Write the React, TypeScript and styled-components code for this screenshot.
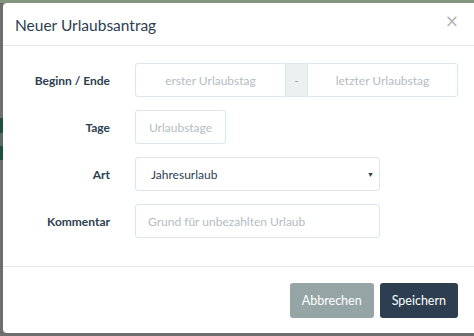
import React from "react";
import styled, { createGlobalStyle } from "styled-components";

const Global = createGlobalStyle`
  html, body { margin: 0; padding: 0; }
  body {
    width: 474px;
    height: 336px;
    overflow: hidden;
    font-family: Lato, "Open Sans", sans-serif;
    background: linear-gradient(
      to bottom,
      #6e6e6e 0px, #6e6e6e 118px,
      #1f4f43 118px, #1f4f43 133px,
      #5a6a66 133px, #5a6a66 146px,
      #1f4f43 146px, #1f4f43 160px,
      #6e6e6e 160px
    );
  }
`;

const Backdrop = styled.div`
  width: 474px;
  height: 336px;
  padding: 3px 0 0 3px;
  box-sizing: border-box;
  background: linear-gradient(to bottom, #86937f 0, #86937f 3px, transparent 3px);
`;

const Modal = styled.div`
  width: 490px;
  height: 330px;
  background: #fff;
  border-radius: 4px 0 0 4px;
  box-sizing: border-box;
  display: flex;
  flex-direction: column;
`;

const Header = styled.div`
  height: 43px;
  box-sizing: border-box;
  border-bottom: 1px solid #e5e5e5;
  display: flex;
  align-items: center;
  padding: 0 12px;
  width: 471px;
`;

const Title = styled.h4`
  margin: 0;
  flex: 1;
  font-size: 15.5px;
  font-weight: 400;
  color: #2c3e50;
  padding-top: 1px;
`;

const Close = styled.button`
  border: 0;
  background: none;
  padding: 0;
  margin-top: -6px;
  margin-right: 3px;
  font-family: "DejaVu Sans", sans-serif;
  font-size: 17px;
  line-height: 1;
  color: #b5b5b5;
  cursor: pointer;
`;

const Body = styled.form`
  padding: 17px 0 28px;
  display: flex;
  flex-direction: column;
  gap: 13px;
  width: 471px;
  border-bottom: 1px solid #e5e5e5;
`;

const Row = styled.div`
  display: flex;
  align-items: center;
  height: 34px;
`;

const Label = styled.label`
  width: 107px;
  text-align: right;
  font-size: 12px;
  font-weight: 700;
  color: #2c3e50;
  padding-right: 25px;
  box-sizing: content-box;
`;

const Input = styled.input<{ $w: number; $center?: boolean }>`
  width: ${(p) => p.$w}px;
  height: 34px;
  box-sizing: border-box;
  border: 1px solid #dce4ec;
  border-radius: 3px;
  padding: 0 12px;
  font-family: Lato, sans-serif;
  font-size: 12px;
  color: #2c3e50;
  text-align: ${(p) => (p.$center ? "center" : "left")};
  outline: none;
  &::placeholder { color: #b4bcc2; }
`;

const Group = styled.div`
  display: flex;
  height: 34px;
`;

const GroupInput = styled(Input)<{ $side: "l" | "r" }>`
  border-radius: ${(p) => (p.$side === "l" ? "3px 0 0 3px" : "0 3px 3px 0")};
`;

const Addon = styled.span`
  width: 21px;
  height: 34px;
  box-sizing: border-box;
  background: #ecf0f1;
  border-top: 1px solid #dce4ec;
  border-bottom: 1px solid #dce4ec;
  display: flex;
  align-items: center;
  justify-content: center;
  font-size: 11px;
  color: #9aa5ab;
`;

const SelectBox = styled.div`
  width: 245px;
  height: 34px;
  box-sizing: border-box;
  border: 1px solid #dce4ec;
  border-radius: 3px;
  display: flex;
  align-items: center;
  padding: 0 5px 0 15px;
  font-size: 12px;
  color: #2c3e50;
`;

const SelectText = styled.span`
  flex: 1;
`;

const Caret = styled.span`
  font-size: 7px;
  color: #2c3e50;
`;

const Footer = styled.div`
  width: 471px;
  display: flex;
  justify-content: flex-end;
  gap: 6px;
  padding: 16px 16px 0 0;
  box-sizing: border-box;
`;

const Button = styled.button<{ $variant: "default" | "primary" }>`
  height: 35px;
  border: 0;
  border-radius: 3px;
  padding: 0 12px;
  font-family: Lato, sans-serif;
  font-size: 12.5px;
  color: #fff;
  background: ${(p) => (p.$variant === "primary" ? "#2c3e50" : "#95a5a6")};
  cursor: pointer;
`;

export default function App() {
  return (
    <>
      <Global />
      <Backdrop>
        <Modal>
          <Header>
            <Title>Neuer Urlaubsantrag</Title>
            <Close type="button">×</Close>
          </Header>
          <Body>
            <Row>
              <Label>Beginn / Ende</Label>
              <Group>
                <GroupInput $side="l" $w={151} $center placeholder="erster Urlaubstag" />
                <Addon>-</Addon>
                <GroupInput $side="r" $w={151} $center placeholder="letzter Urlaubstag" />
              </Group>
            </Row>
            <Row>
              <Label>Tage</Label>
              <Input $w={91} $center placeholder="Urlaubstage" />
            </Row>
            <Row>
              <Label>Art</Label>
              <SelectBox>
                <SelectText>Jahresurlaub</SelectText>
                <Caret>▼</Caret>
              </SelectBox>
            </Row>
            <Row>
              <Label>Kommentar</Label>
              <Input $w={245} placeholder="Grund für unbezahlten Urlaub" />
            </Row>
          </Body>
          <Footer>
            <Button $variant="default" type="button">Abbrechen</Button>
            <Button $variant="primary" type="button">Speichern</Button>
          </Footer>
        </Modal>
      </Backdrop>
    </>
  );
}
